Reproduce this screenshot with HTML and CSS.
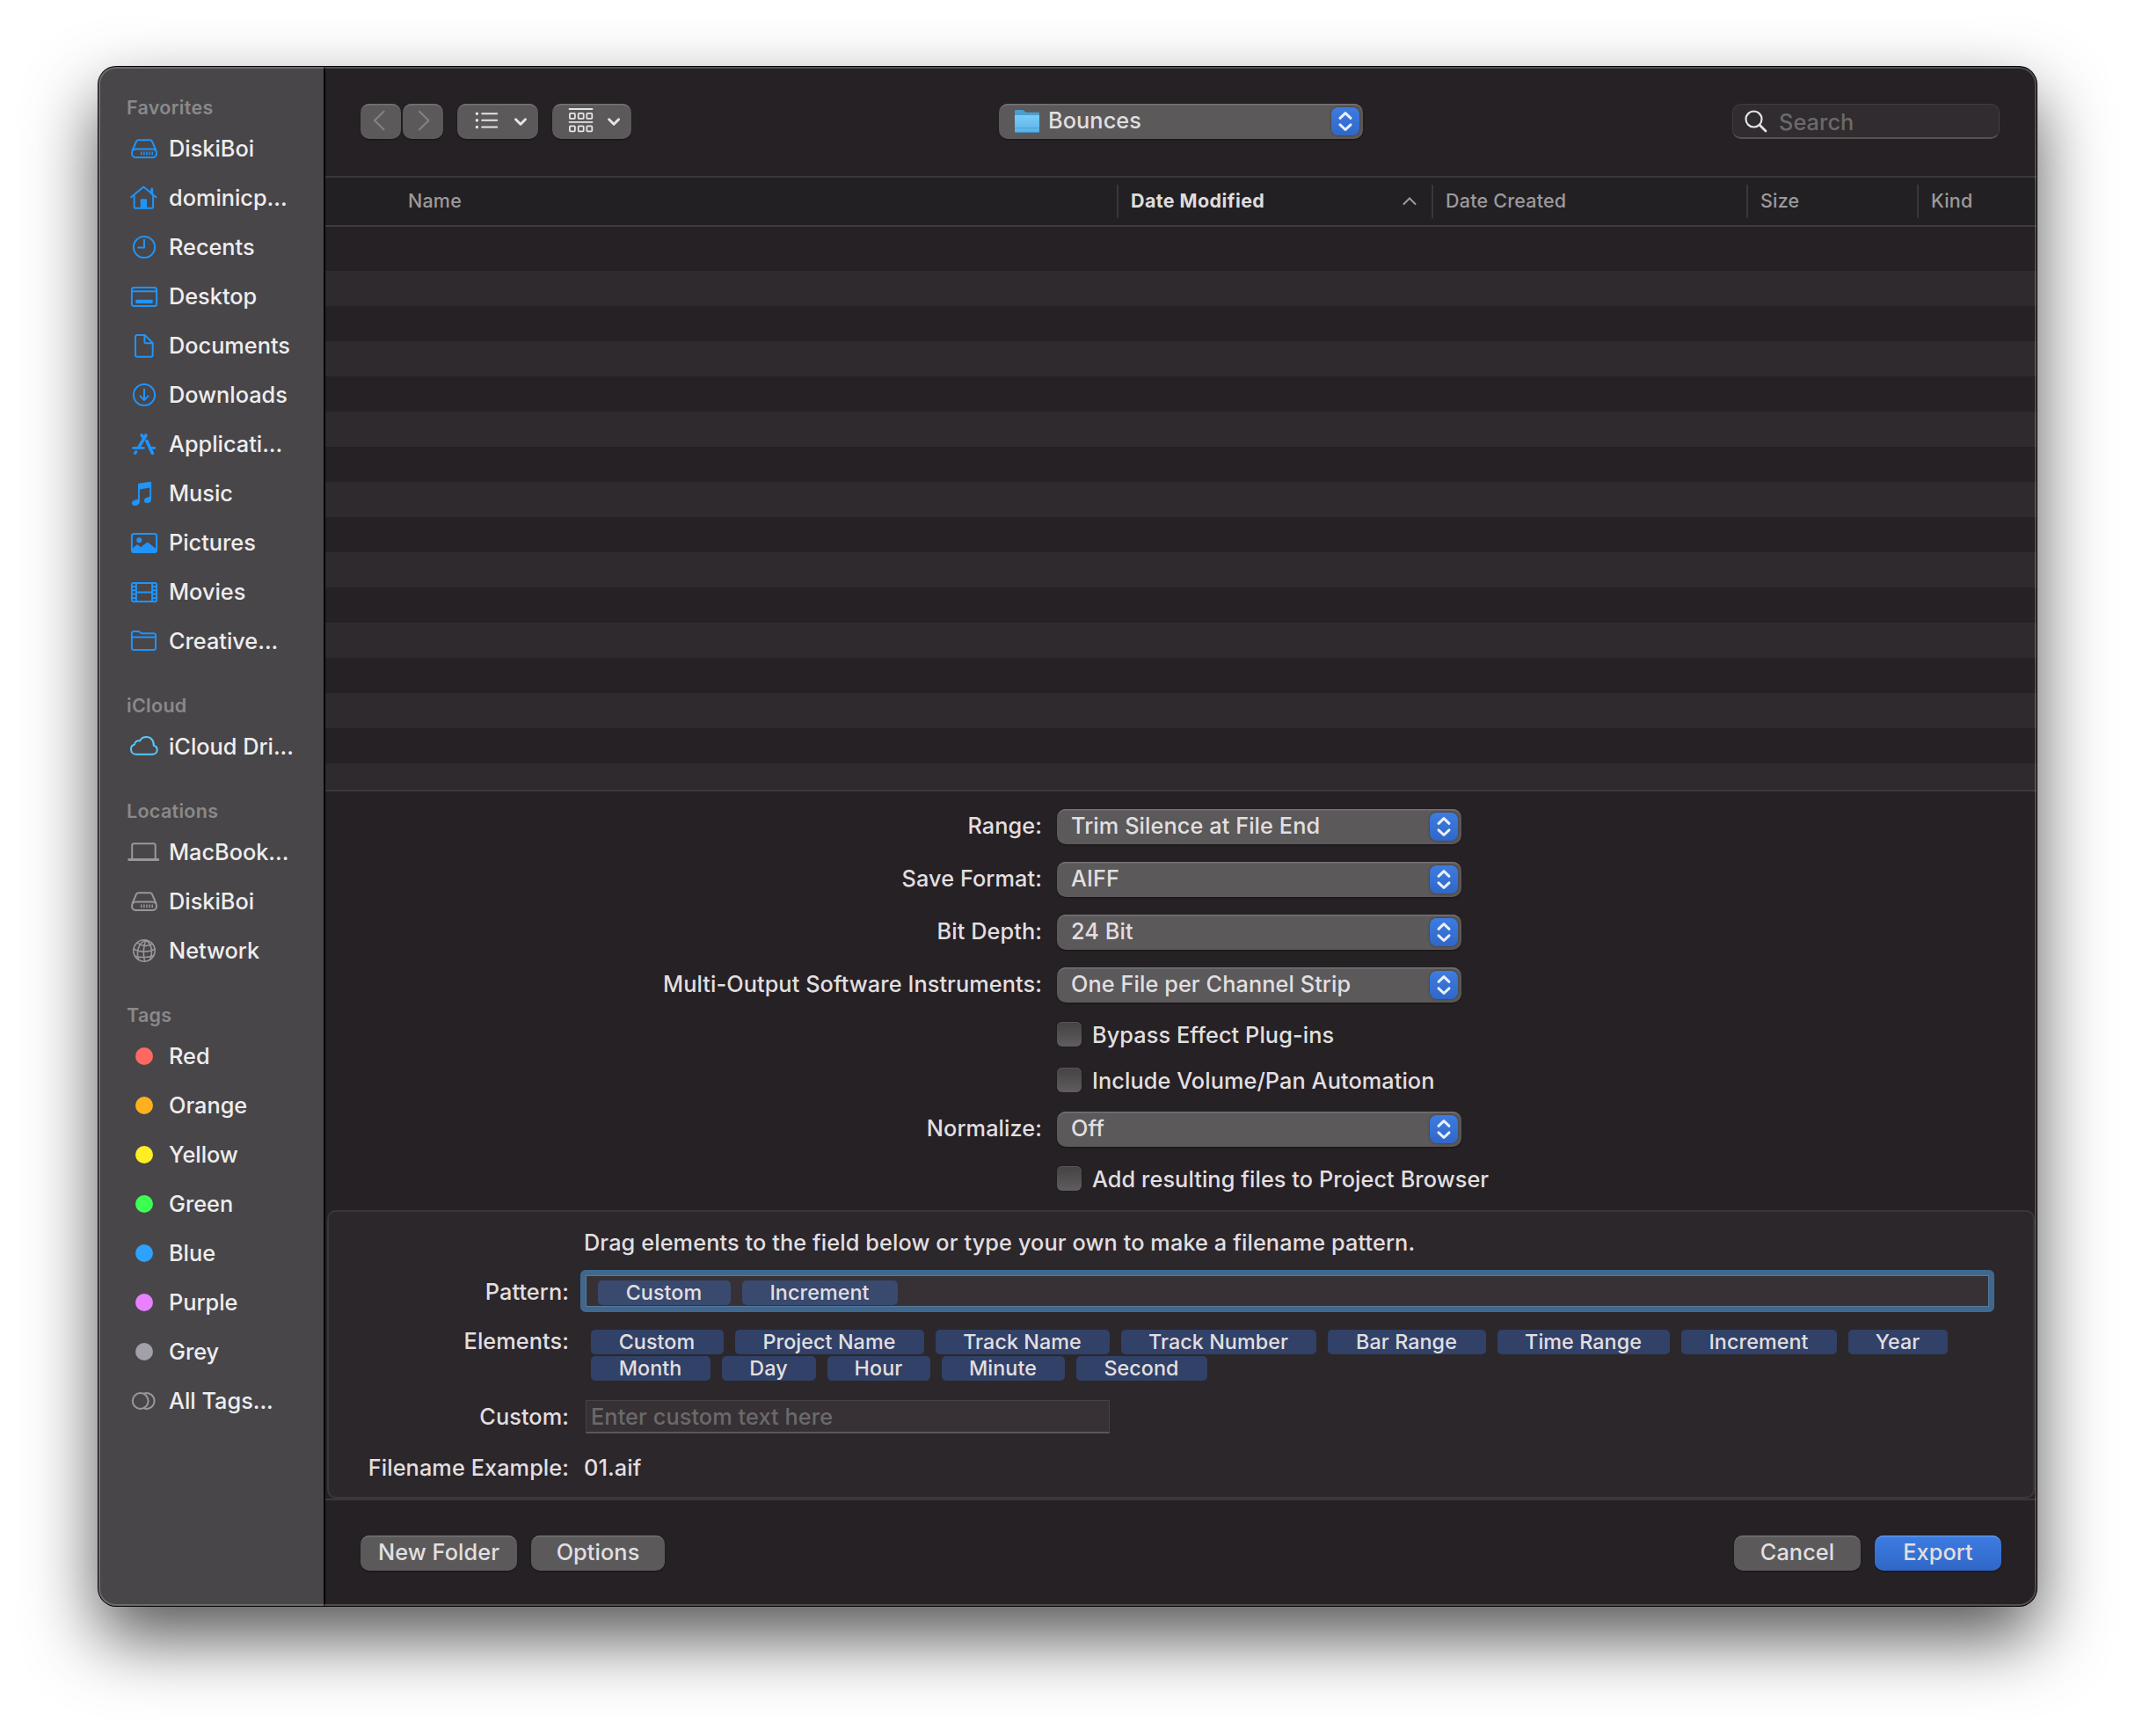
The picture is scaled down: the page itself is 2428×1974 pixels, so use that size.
FILE: index.html
```html
<!DOCTYPE html>
<html lang="en">
<head>
    <meta charset="UTF-8">
    <meta name="viewport" content="width=device-width, initial-scale=1.0">
    <title>Export</title>
    <link rel="stylesheet" href="styles.css">
</head>
<body>

<!-- shared icons -->
<svg class="defs" width="0" height="0">
    <symbol id="disk" viewBox="0 0 40 40">
        <path d="M6.6 22 L11 11.8 Q11.8 10.2 13.5 10.2 H26.5 Q28.2 10.2 29 11.8 L33.4 22"/>
        <rect x="6" y="20.5" width="28" height="9.6" rx="4.6"/>
        <path d="M16.8 23.5v3.8M19.9 23.5v3.8M23 23.5v3.8M26.1 23.5v3.8M29.2 23.5v3.8" stroke-width="1.5" stroke-linecap="butt"/>
    </symbol>
    <symbol id="arrows" viewBox="0 0 32 32">
        <path d="M10 12.3 L16 6.6 L22 12.3 M10 19.8 L16 25.5 L22 19.8" fill="none" stroke="#e9effa" stroke-width="3" stroke-linecap="round" stroke-linejoin="round"/>
    </symbol>
</svg>

<div class="window">
    <div class="sidebar">
        <div class="group">Favorites</div>
        <div class="item"><svg class="icon"><use href="#disk"/></svg><span>DiskiBoi</span></div>
        <div class="item"><svg class="icon" viewBox="0 0 40 40"><path d="M5 19.2 L19.3 7.4 L33.6 19.2 M8.6 17 V30 Q8.6 31.7 10.3 31.7 H28.4 Q30.1 31.7 30.1 30 V17"/><path d="M28.7 10 V15" stroke-width="3"/><path class="fill" d="M15.7 32 V22.3 Q15.7 21.3 16.7 21.3 H22 Q23 21.3 23 22.3 V32z"/></svg><span>dominicp...</span></div>
        <div class="item"><svg class="icon" viewBox="0 0 40 40"><circle cx="20" cy="20" r="12.1"/><path d="M20 11.8 V20.5 H13.3"/></svg><span>Recents</span></div>
        <div class="item"><svg class="icon" viewBox="0 0 40 40"><rect x="5.9" y="9.9" width="28.2" height="21.2" rx="2.5"/><path d="M6 14.3 H34"/><rect class="fill" x="10.3" y="23.7" width="19.4" height="4.3" rx="1"/></svg><span>Desktop</span></div>
        <div class="item"><svg class="icon" viewBox="0 0 40 40"><path d="M12.2 7.9 H20.6 L29.7 17 V30.6 Q29.7 32.8 27.5 32.8 H12.2 Q10 32.8 10 30.6 V10.1 Q10 7.9 12.2 7.9z M20.4 8.2 V15.6 Q20.4 17.2 22 17.2 H29.4"/></svg><span>Documents</span></div>
        <div class="item"><svg class="icon" viewBox="0 0 40 40"><circle cx="20" cy="20" r="12.1"/><path d="M20 13.8 V25.6 M15.4 21.4 L20 26 L24.6 21.4"/></svg><span>Downloads</span></div>
        <div class="item"><svg class="icon" viewBox="0 0 40 40"><path d="M22 10 L13.8 23.6 M22.9 16.6 L29.3 30.3 M17.2 9.8 L19 12.6" stroke-width="3.6"/><path d="M7.4 24.4 H19.5 M26.5 24.4 H31.8" stroke-width="2.7"/><path d="M10.8 28.6 L9.6 30.4" stroke-width="3.2"/></svg><span>Applicati...</span></div>
        <div class="item"><svg class="icon" viewBox="0 0 40 40"><path class="fill" d="M13 9.7 Q13 9 13.8 8.8 L27 6.8 Q28.1 6.8 28.1 7.6 V26.5 C28.1 29.5 26 31.1 23.3 31.1 C18.9 31.1 18.6 25.6 23.6 24.6 C25.5 24.2 26.2 24 26.2 22.6 V13.4 L14.9 15.4 V29.3 C14.9 32.3 12.3 34 9.7 34 C4.8 34 4.6 28.4 9.8 27.4 C12 27 13 26.9 13 25.2z"/></svg><span>Music</span></div>
        <div class="item"><svg class="icon" viewBox="0 0 40 40"><rect x="5.9" y="9.9" width="28.2" height="21.2" rx="2.5"/><circle class="fill" cx="14.3" cy="17.3" r="3"/><path class="fill" d="M6 27 L11.4 22.6 Q12.3 22 13.2 22.7 L16 25.3 L22.4 20.2 Q23.7 19.3 25 20.2 L34 27.4 V30 Q34 31 33 31 H7 Q6 31 6 30z"/></svg><span>Pictures</span></div>
        <div class="item"><svg class="icon" viewBox="0 0 40 40"><rect x="5.9" y="9.9" width="28.2" height="21.2" rx="2"/><path d="M10.9 10 V31 M29.1 10 V31 M11 20.4 H29 M6 14 H11 M6 18.3 H11 M6 22.6 H11 M6 26.9 H11 M29 14 H34 M29 18.3 H34 M29 22.6 H34 M29 26.9 H34"/></svg><span>Movies</span></div>
        <div class="item"><svg class="icon" viewBox="0 0 40 40"><path d="M8 8.9 H13 Q14 8.9 14.8 9.6 L16.2 10.8 Q16.8 11.2 17.8 11.2 H30.5 Q33 11.2 33 13.6 V27.4 Q33 29.9 30.5 29.9 H8.4 Q5.9 29.9 5.9 27.4 V11.2 Q5.9 8.9 8 8.9z M6 15.5 H33"/></svg><span>Creative...</span></div>

        <div class="group">iCloud</div>
        <div class="item cloud"><svg class="icon" viewBox="0 0 40 40"><path d="M11 28.8 H29.3 C32.5 28.8 34.7 26.6 34.7 23.8 C34.7 21.3 33.2 19.4 30.8 18.8 C31.2 13 27.4 9 22.6 9 C18.9 9 16.2 10.9 14.9 13.6 C12 12.7 9.2 14.4 9 17.5 C6.6 18.2 5 20.2 5 22.9 C5 26.2 7.5 28.8 11 28.8z"/></svg><span>iCloud Dri...</span></div>

        <div class="group">Locations</div>
        <div class="item grey"><svg class="icon" viewBox="0 0 40 40"><path d="M6.2 27.5 V12.2 Q6.2 10.2 8.2 10.2 H30.7 Q32.7 10.2 32.7 12.2 V27.5"/><rect class="fill" x="1.2" y="27" width="36" height="3" rx="1.4"/></svg><span>MacBook...</span></div>
        <div class="item grey"><svg class="icon"><use href="#disk"/></svg><span>DiskiBoi</span></div>
        <div class="item grey"><svg class="icon" viewBox="0 0 40 40"><g stroke-width="1.6"><circle cx="20" cy="20" r="12.2"/><path d="M22 8 C14 11 10.5 20 13.5 30 M22 8 C19 14 18.5 25 20.5 32 M22 8 C29 13 30 22 26.5 30.3 M12 11 C17 15 24 15.5 29.5 12.4 M8 18 C14 22 26 22 32 18 M9.8 26.5 C15 28 24 28 30.8 25.4"/></g></svg><span>Network</span></div>

        <div class="group">Tags</div>
        <div class="item"><i class="dot red"></i><span>Red</span></div>
        <div class="item"><i class="dot orange"></i><span>Orange</span></div>
        <div class="item"><i class="dot yellow"></i><span>Yellow</span></div>
        <div class="item"><i class="dot green"></i><span>Green</span></div>
        <div class="item"><i class="dot blue"></i><span>Blue</span></div>
        <div class="item"><i class="dot purple"></i><span>Purple</span></div>
        <div class="item"><i class="dot silver"></i><span>Grey</span></div>
        <div class="item grey"><svg class="icon" viewBox="0 0 40 40"><circle cx="15.7" cy="20" r="8.9"/><path d="M20 11.5 A8.9 8.9 0 1 1 20 28.5"/></svg><span>All Tags...</span></div>
    </div>

    <div class="main">
        <div class="toolbar">
            <div class="tools">
                <button class="btn nav"><svg width="46" height="40"><path d="M26.5 8.8 L16 19 L26.5 29.3"/></svg></button>
                <button class="btn nav"><svg width="46" height="40"><path d="M19 8.8 L29.5 19 L19 29.3"/></svg></button>
                <button class="btn view-list">
                    <svg width="92" height="40"><path d="M28.2 11.2 H45.2 M28.2 18.8 H45.2 M28.2 26.5 H45.2" stroke-width="2"/><path d="M22.4 11.2 v0.1 M22.4 18.8 v0.1 M22.4 26.4 v0.1" stroke-width="3.4"/><path d="M66.5 17.8 L72 23.2 L77.5 17.8" stroke-width="3"/></svg>
                </button>
                <button class="btn view-group">
                    <svg width="90" height="40"><path d="M19.5 6 H45.5 M19.5 20.8 H45.5" stroke-width="1.8"/><g stroke-width="1.8"><rect x="19.9" y="10.9" width="6" height="6" rx="1"/><rect x="29.7" y="10.9" width="6" height="6" rx="1"/><rect x="39.3" y="10.9" width="6" height="6" rx="1"/><rect x="19.9" y="25.3" width="6" height="6" rx="1"/><rect x="29.7" y="25.3" width="6" height="6" rx="1"/><rect x="39.3" y="25.3" width="6" height="6" rx="1"/></g><path d="M64.6 17.8 L70.1 23.2 L75.6 17.8" stroke-width="3"/></svg>
                </button>
            </div>
            <div class="popup folder">
                <svg class="folder-icon" width="28" height="27" viewBox="0 0 28 27">
                    <defs><linearGradient id="fold" x1="0" y1="0" x2="0" y2="1"><stop offset="0" stop-color="#7acdf8"/><stop offset="1" stop-color="#58b1e6"/></linearGradient></defs>
                    <path d="M0 1.4 Q0 0 1.4 0 H8.6 Q9.6 0 10.4 0.8 L12 2.2 Q12.7 2.8 13.8 2.8 H26.6 Q28 2.8 28 4.2 V8 H0z" fill="#4a9fd0"/>
                    <path d="M0 6 H28 V24.6 Q28 26 26.6 26 H1.4 Q0 26 0 24.6z" fill="url(#fold)"/>
                    <path d="M0 20.6 H28" stroke="#4fa3d6"/>
                    <path d="M0.5 25.4 H27.5" stroke="#3f8fc4"/>
                </svg>
                <span>Bounces</span>
                <svg class="knob"><use href="#arrows"/></svg>
            </div>
            <div class="search">
                <svg width="28" height="28" viewBox="0 0 28 28"><circle cx="11.5" cy="11.5" r="9"/><path d="M18 18 L25 25" stroke-width="2.8"/></svg>
                <input type="text" placeholder="Search">
            </div>
        </div>

        <div class="columns">
            <div class="col name">Name</div>
            <div class="col modified">Date Modified<svg width="18" height="12"><path d="M2.5 10 L9 3.5 L15.5 10"/></svg></div>
            <div class="col created">Date Created</div>
            <div class="col size">Size</div>
            <div class="col kind">Kind</div>
        </div>

        <div class="files">
            <div class="row"></div><div class="row"></div><div class="row"></div><div class="row"></div>
            <div class="row"></div><div class="row"></div><div class="row"></div><div class="row"></div>
            <div class="row"></div><div class="row"></div><div class="row"></div><div class="row"></div>
            <div class="row"></div><div class="row"></div><div class="row"></div><div class="row"></div>
        </div>

        <div class="settings">
            <label>Range:</label>
            <div class="popup"><span>Trim Silence at File End</span><svg class="knob"><use href="#arrows"/></svg></div>
            <label>Save Format:</label>
            <div class="popup"><span>AIFF</span><svg class="knob"><use href="#arrows"/></svg></div>
            <label>Bit Depth:</label>
            <div class="popup"><span>24 Bit</span><svg class="knob"><use href="#arrows"/></svg></div>
            <label>Multi-Output Software Instruments:</label>
            <div class="popup"><span>One File per Channel Strip</span><svg class="knob"><use href="#arrows"/></svg></div>
            <div class="check"><i></i><span>Bypass Effect Plug-ins</span></div>
            <div class="check"><i></i><span>Include Volume/Pan Automation</span></div>
            <label>Normalize:</label>
            <div class="popup"><span>Off</span><svg class="knob"><use href="#arrows"/></svg></div>
            <div class="check"><i></i><span>Add resulting files to Project Browser</span></div>
        </div>

        <div class="naming">
            <p class="hint">Drag elements to the field below or type your own to make a filename pattern.</p>
            <label class="pattern-label">Pattern:</label>
            <div class="pattern">
                <span class="chip custom">Custom</span>
                <span class="chip increment">Increment</span>
            </div>
            <label>Elements:</label>
            <div class="elements">
                <span class="chip custom">Custom</span>
                <span class="chip project">Project Name</span>
                <span class="chip track">Track Name</span>
                <span class="chip number">Track Number</span>
                <span class="chip bar">Bar Range</span>
                <span class="chip time">Time Range</span>
                <span class="chip increment">Increment</span>
                <span class="chip year">Year</span>
                <span class="chip month">Month</span>
                <span class="chip day">Day</span>
                <span class="chip hour">Hour</span>
                <span class="chip minute">Minute</span>
                <span class="chip second">Second</span>
            </div>
            <label>Custom:</label>
            <input class="custom-text" type="text" placeholder="Enter custom text here">
            <label>Filename Example:</label>
            <span class="example">01.aif</span>
        </div>

        <div class="footer">
            <button class="btn new-folder">New Folder</button>
            <button class="btn options">Options</button>
            <button class="btn cancel">Cancel</button>
            <button class="btn export">Export</button>
        </div>
    </div>
</div>

</body>
</html>
```

FILE: styles.css
```css
* {
    box-sizing: border-box;
}

body {
    font-family: Inter, 'Liberation Sans', sans-serif;
    font-size: 25.3px;
    font-weight: 450;
    letter-spacing: 0.08px;
    color: #e1dfe0;
    background-color: #fff;
    margin: 0;
    padding: 76px 112px 0;
    height: 1974px;
    overflow: hidden;
}

button, input {
    font: inherit;
    letter-spacing: inherit;
    color: inherit;
    border: none;
    margin: 0;
    padding: 0;
    outline: none;
}

.defs {
    position: absolute;
}

.window {
    position: relative;
    display: flex;
    width: 2204px;
    height: 1750px;
    border-radius: 20px;
    overflow: hidden;
    background-color: #262124;
    box-shadow: 0 0 0 1px #000, 0 36px 80px rgba(0, 0, 0, 0.67);
}

/* light rim on top of the content */
.window::after {
    content: "";
    position: absolute;
    inset: 0;
    border-radius: 20px;
    box-shadow: inset 0 0 0 2px rgba(255, 255, 255, 0.2);
    pointer-events: none;
}

/* sidebar */
.sidebar {
    width: 258px;
    flex: none;
    padding-top: 1px;
    background-color: #484649;
    border-right: 2px solid #000;
}

.group {
    height: 64px;
    padding: 31px 0 0 32px;
    line-height: 28px;
    font-size: 21.5px;
    font-weight: 600;
    letter-spacing: 0.3px;
    color: #8a898b;
}

.item {
    display: flex;
    align-items: center;
    height: 56px;
    padding-left: 32px;
    color: #eeedee;
    white-space: nowrap;
    letter-spacing: 0;
}

.item span {
    padding-bottom: 2px;
}

.icon {
    width: 40px;
    height: 40px;
    margin-right: 8px;
    flex: none;
    fill: none;
    stroke: #2094fa;
    stroke-width: 2;
    stroke-linecap: round;
    stroke-linejoin: round;
}

.icon .fill {
    fill: #2094fa;
    stroke: none;
}

.cloud .icon {
    stroke: #5ac8fa;
}

.grey .icon {
    stroke: #98979a;
}

.grey .icon .fill {
    fill: #98979a;
}

.dot {
    width: 20px;
    height: 20px;
    border-radius: 50%;
    margin: 0 18px 0 10px;
}

.red { background-color: #ff6961; }
.orange { background-color: #ffb01e; }
.yellow { background-color: #ffee25; }
.green { background-color: #3cff53; }
.blue { background-color: #2ea2ff; }
.purple { background-color: #e880ff; }
.silver { background-color: #a2a1a7; }

/* main area */
.main {
    flex: 1;
    display: flex;
    flex-direction: column;
}

.toolbar {
    display: flex;
    align-items: flex-start;
    height: 124px;
    padding: 42px 42px 0 40px;
}

.tools {
    display: flex;
    margin-right: 418px;
}

.btn {
    height: 40px;
    border-radius: 10px;
    background-color: #5b595a;
    line-height: 37px;
    padding-bottom: 3px;
    box-shadow: inset 0 2px 0 -0.5px #757374, 0 1px 2px rgba(0, 0, 0, 0.4);
}

.btn svg {
    display: block;
    fill: none;
    stroke: #e6e5e6;
    stroke-linecap: round;
    stroke-linejoin: round;
}

.nav {
    width: 46px;
    margin-right: 2px;
}

.nav svg {
    stroke: #838182;
    stroke-width: 2.2;
}

.view-list {
    width: 92px;
    margin: 0 16px 0 14px;
}

.view-group {
    width: 90px;
}

.popup {
    display: flex;
    align-items: center;
    width: 460px;
    height: 40px;
    padding: 0 4px 0 16px;
    border-radius: 10px;
    background-color: #5b595a;
    box-shadow: inset 0 2px 0 -0.5px #757374, 0 1px 2px rgba(0, 0, 0, 0.4);
}

.popup span {
    flex: 1;
    line-height: 38px;
    padding-bottom: 2px;
}

.knob {
    width: 32px;
    height: 32px;
    border-radius: 8px;
    background: linear-gradient(#3d7ce2, #3067c7);
    box-shadow: 0 0 3px rgba(0, 0, 0, 0.4);
}

.folder {
    width: 414px;
    padding-left: 18px;
}

.folder-icon {
    margin-right: 10px;
}

.search {
    display: flex;
    align-items: center;
    width: 304px;
    height: 40px;
    margin-left: auto;
    padding-left: 12px;
    border: 1px solid #413d40;
    border-bottom: 2px solid #555254;
    border-radius: 10px;
    background-color: #312c2f;
}

.search svg {
    fill: none;
    stroke: #e6e5e6;
    stroke-width: 2.2;
    stroke-linecap: round;
}

.search input {
    width: 230px;
    margin: 1px 0 0 12px;
    background: none;
}

::placeholder {
    color: #6b696b;
    opacity: 1;
}

.columns {
    display: flex;
    align-items: center;
    height: 58px;
    border-top: 2px solid #3a383b;
    border-bottom: 2px solid #3d3a3d;
    background-color: #232023;
    font-size: 21.5px;
    font-weight: 500;
    letter-spacing: 0.2px;
    color: #9c9a9c;
}

.col {
    display: flex;
    align-items: center;
    height: 38px;
    padding: 0 0 2px 14px;
    border-left: 2px solid #3a373a;
}

.name {
    width: 900px;
    padding-left: 94px;
    border: none;
}

.modified {
    width: 358px;
    justify-content: space-between;
    padding-right: 16px;
    font-weight: 700;
    letter-spacing: 0.4px;
    color: #dddcdd;
}

.modified svg {
    fill: none;
    stroke: #9c9a9c;
    stroke-width: 2;
    stroke-linecap: round;
}

.created {
    width: 358px;
}

.size {
    width: 194px;
}

.files {
    height: 642px;
    padding-top: 10px;
    border-bottom: 2px solid #3a383b;
    overflow: hidden;
}

.row {
    height: 40px;
}

.row:nth-child(even) {
    background-color: #2f2a2d;
}

.settings {
    display: grid;
    grid-template-columns: 815px 1fr;
    grid-template-rows: 60px 60px 60px 62px 52px 50px 62px 50px;
    column-gap: 17px;
    padding-top: 20px;
    height: 476px;
}

.settings label {
    text-align: right;
    line-height: 38px;
}

.check {
    grid-column: 2;
    display: flex;
    align-items: center;
    height: 28px;
}

.check i {
    width: 28px;
    height: 28px;
    margin-right: 12px;
    border-radius: 6px;
    background: linear-gradient(#444243, #5f5d5e);
    box-shadow: inset 0 1px 0 #5a5859, 0 0 2px rgba(0, 0, 0, 0.4);
}

/* filename pattern panel */
.naming {
    display: grid;
    grid-template-columns: 273px 1fr;
    grid-template-rows: 52px 62px 86px 58px 1fr;
    column-gap: 13px;
    height: 328px;
    margin: 0 2px;
    padding: 14px 44px 0 0;
    border: 2px solid #3a373a;
    border-radius: 10px;
    background-color: #2c272b;
}

.naming label {
    text-align: right;
    line-height: 38px;
}

.naming .pattern-label {
    line-height: 50px;
}

.hint {
    grid-column: 2;
    margin: 0 0 0 4px;
    line-height: 42px;
    letter-spacing: 0.1px;
}

.pattern {
    display: flex;
    gap: 13px;
    height: 48px;
    padding: 6px 14px;
    border: 6px solid #40688f;
    border-radius: 6px;
    background-color: #373135;
    box-shadow: inset 0 0 0 1px #56799b;
}

.elements {
    display: flex;
    flex-wrap: wrap;
    align-content: flex-start;
    gap: 2px 13px;
    padding: 6px 0 0 12px;
}

.chip {
    height: 28px;
    line-height: 27px;
    padding-right: 1px;
    border-radius: 5px;
    background-color: #314167;
    font-size: 23.3px;
    text-align: center;
}

.pattern .chip {
    background-color: #394a6e;
}

.custom { width: 151px; }
.project { width: 215px; }
.track { width: 198px; }
.number { width: 222px; }
.bar { width: 180px; }
.time { width: 196px; }
.increment { width: 177px; }
.year { width: 113px; }
.month { width: 136px; }
.day { width: 107px; }
.hour { width: 117px; }
.minute { width: 140px; }
.second { width: 149px; }

.custom-text {
    width: 596px;
    height: 38px;
    margin-left: 6px;
    padding-left: 5px;
    border: 1px solid #454144;
    border-bottom: 2px solid #5a5759;
    background-color: #373135;
}

.example {
    margin-left: 4px;
    line-height: 38px;
}

.footer {
    display: flex;
    flex: 1;
    padding: 40px 40px 0;
    border-top: 2px solid #3a383b;
}

.new-folder {
    width: 178px;
    margin-right: 16px;
}

.options {
    width: 152px;
}

.cancel {
    width: 144px;
    margin: 0 16px 0 auto;
}

.export {
    width: 144px;
    background: linear-gradient(#3d7ce2, #3067c7);
    box-shadow: inset 0 2px 0 -0.5px #6096e8, 0 1px 2px rgba(0, 0, 0, 0.4);
}
```
